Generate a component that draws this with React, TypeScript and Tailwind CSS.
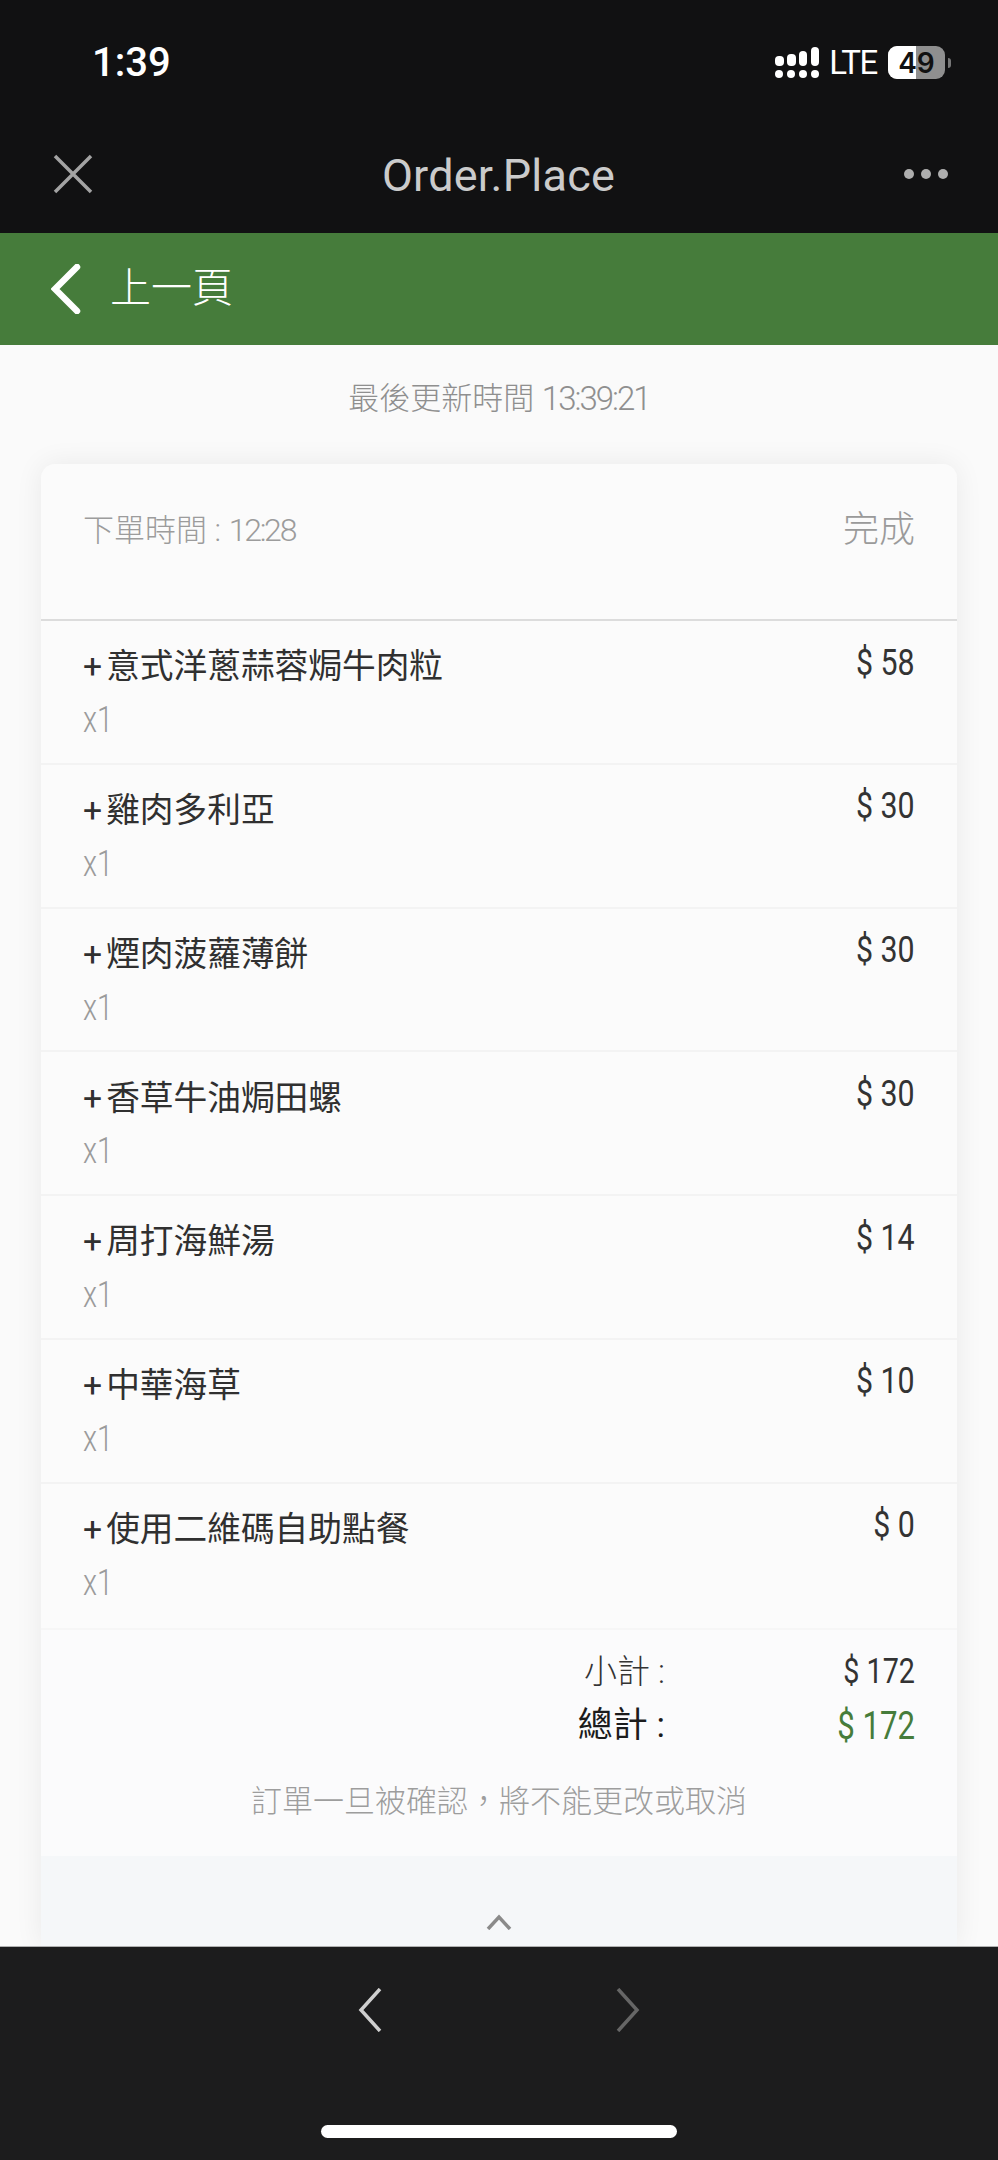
import React from 'react';

const FONT = "font-['Roboto','Noto_Sans_CJK_TC',sans-serif]";

const items = [
  { name: '意式洋蔥蒜蓉焗牛肉粒', price: 58 },
  { name: '雞肉多利亞', price: 30 },
  { name: '煙肉菠蘿薄餅', price: 30 },
  { name: '香草牛油焗田螺', price: 30 },
  { name: '周打海鮮湯', price: 14 },
  { name: '中華海草', price: 10 },
  { name: '使用二維碼自助點餐', price: 0 },
];

const SignalIcon = () => (
  <svg width="44" height="32" viewBox="0 0 44 32" fill="#fff">
    <rect x="0" y="9" width="9" height="10" rx="4" />
    <rect x="12" y="7" width="9" height="12" rx="4" />
    <rect x="24" y="4" width="8" height="15" rx="4" />
    <rect x="36" y="0" width="8" height="19" rx="4" />
    <rect x="0" y="23" width="8" height="8" rx="4" />
    <rect x="12" y="23" width="8" height="8" rx="4" />
    <rect x="24" y="23" width="8" height="8" rx="4" />
    <rect x="36" y="23" width="8" height="8" rx="4" />
  </svg>
);

const Battery = () => (
  <div className="flex items-center">
    <div className="relative w-[57px] h-[33px] rounded-[9px] overflow-hidden bg-[#8f8f8f]">
      <div className="absolute inset-y-0 left-0 w-[28px] bg-white" />
      <div className="absolute inset-0 flex items-center justify-center text-[28px] font-semibold leading-none text-[#111] font-['Inter',sans-serif]">
        49
      </div>
    </div>
    <div className="ml-[3px] w-[3px] h-[10px] rounded-r-full bg-[#777]" />
  </div>
);

const Row: React.FC<{ name: string; price: number; last: boolean }> = ({ name, price, last }) => (
  <div className={`h-[143.8px] px-[42px] flex justify-between ${last ? '' : 'border-b-[2px] border-[#f3f3f3]'}`}>
    <div>
      <div className="mt-[22px] h-[48px] flex items-center text-[33.7px] leading-none text-[#303030]">
        <span className="mr-[4px]">+</span>
        <span>{name}</span>
      </div>
      <div className="mt-[7px] text-[36px] leading-[44px] font-light origin-left scale-x-[0.8] text-[#9b9b9b]">x1</div>
    </div>
    <div className="mt-[17px] h-[48px] flex items-center text-[37px] leading-none origin-right scale-x-[0.82] whitespace-pre text-[#333]">
      {`$ ${price}`}
    </div>
  </div>
);

export default function App() {
  return (
    <div className={`w-[998px] h-[2160px] flex flex-col overflow-hidden bg-[#fafafa] ${FONT}`}>
      {/* Status bar + webview title */}
      <div className="h-[233px] shrink-0 bg-[#111112]">
        <div className="h-[125px] pl-[92px] pr-[47px] flex items-center justify-between">
          <span className="text-[40px] font-medium leading-none text-white">1:39</span>
          <div className="flex items-center">
            <SignalIcon />
            <span className="ml-[10px] mr-[11px] text-[33px] leading-none tracking-[-0.04em] text-white">LTE</span>
            <Battery />
          </div>
        </div>
        <div className="h-[100px] pl-[53px] pr-[50px] flex items-center justify-between">
          <svg className="-mt-[2px]" width="40" height="40" viewBox="0 0 40 40" fill="none" stroke="#a3a3a3" strokeWidth="3.5">
            <path d="M2 2L38 38M38 2L2 38" />
          </svg>
          <span className="text-[45px] tracking-[0.005em] leading-none text-[#cbcbcb]">Order.Place</span>
          <div className="-mt-[2px] w-[44px] flex justify-between">
            <span className="w-[10px] h-[10px] rounded-full bg-[#aeaeae]" />
            <span className="w-[10px] h-[10px] rounded-full bg-[#aeaeae]" />
            <span className="w-[10px] h-[10px] rounded-full bg-[#aeaeae]" />
          </div>
        </div>
      </div>

      {/* Back bar */}
      <div className="h-[112px] shrink-0 bg-[#467c3b] pl-[51px] flex items-center">
        <svg width="30" height="50" viewBox="0 0 30 50" fill="none" stroke="#fff" strokeWidth="6.5" strokeLinecap="round">
          <path d="M26 3L4 25L26 47" />
        </svg>
        <span className="ml-[29px] -mt-[2px] text-[41px] font-light leading-none text-white">上一頁</span>
      </div>

      {/* Order */}
      <div className="flex-1 min-h-0 overflow-hidden">
        <div className="mt-[34px] h-[38px] flex items-center justify-center text-[31px] font-light leading-none text-[#8f8f8f]">
          最後更新時間&nbsp;<span className="text-[33px] tracking-[-0.06em]">13:39:21</span>
        </div>
        <div className="mt-[47px] mx-[41px] rounded-t-[14px] bg-[#fbfbfb] shadow-[0_0_28px_rgba(0,0,0,0.07)]">
          <div className="h-[157px] px-[42px] pt-[48px] flex justify-between items-start border-b-[2px] border-[#dcdcdc]">
            <span className="h-[36px] flex items-center text-[31px] font-light leading-none text-[#9c9c9c]">
              下單時間&nbsp;:&nbsp;<span className="text-[32px] tracking-[-0.07em]">12:28</span>
            </span>
            <span className="h-[36px] flex items-center text-[36px] font-light leading-none text-[#9a9a9a]">完成</span>
          </div>

          {items.map((it, i) => (
            <Row key={it.name} name={it.name} price={it.price} last={i === items.length - 1} />
          ))}

          <div className="h-[228px] px-[42px] pt-[23px] bg-[#fbfbfc] border-t-[2px] border-[#f6f6f6]">
            <div className="flex justify-end items-center h-[38px] text-[#333]">
              <span className="text-[33px] font-light leading-none">小計 :</span>
              <span className="w-[250px] text-right text-[35px] leading-none origin-right scale-x-[0.82] whitespace-pre">$ 172</span>
            </div>
            <div className="mt-[16px] flex justify-end items-center h-[38px]">
              <span className="text-[35px] leading-none text-[#1c1c1c]">總計 :</span>
              <span className="w-[250px] text-right text-[38px] leading-none origin-right scale-x-[0.82] whitespace-pre text-[#467c3b]">$ 172</span>
            </div>
            <div className="mt-[38px] text-center text-[31px] font-light leading-[38px] text-[#9d9d9d]">
              {'訂單一旦被確認\uFF0C將不能更改或取消'}
            </div>
          </div>

          <div className="h-[90px] pt-[58px] flex justify-center bg-[#f5f7f9]">
            <svg width="26" height="16" viewBox="0 0 26 16" fill="none" stroke="#8a8a8a" strokeWidth="3.5">
              <path d="M2 15L13 3L24 15" />
            </svg>
          </div>
        </div>
      </div>

      {/* Toolbar */}
      <div className="h-[214px] shrink-0 bg-[#1c1c1d] border-t border-[#b0b0b0]">
        <div className="pt-[41px] pl-[358px] flex">
          <svg width="24" height="44" viewBox="0 0 24 44" fill="none" stroke="#cfcfcf" strokeWidth="3.5">
            <path d="M22 1L3 22L22 43" />
          </svg>
          <svg className="ml-[234px]" width="24" height="44" viewBox="0 0 24 44" fill="none" stroke="#666" strokeWidth="3.5">
            <path d="M2 1L21 22L2 43" />
          </svg>
        </div>
        <div className="mt-[93px] mx-auto w-[356px] h-[13px] rounded-full bg-white" />
      </div>
    </div>
  );
}
